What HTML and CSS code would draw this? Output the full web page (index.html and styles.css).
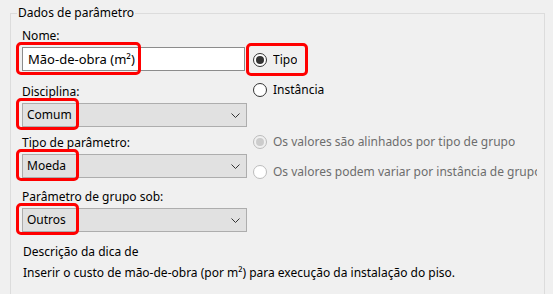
FILE: index.html
```html
<!DOCTYPE html>
<html lang="pt">
<head>
    <meta charset="UTF-8">
    <title>Dados de parâmetro</title>
    <link rel="stylesheet" href="styles.css">
</head>
<body>
    <fieldset class="group">
        <legend>Dados de parâmetro</legend>
        <div class="columns">
            <div class="left-col">
                <div class="field">
                    <label class="label">Nome:</label>
                    <div class="input">Mão-de-obra (m²)</div>
                    <span class="mark mark-name"></span>
                </div>
                <div class="field loose">
                    <label class="label">Disciplina:</label>
                    <div class="select">Comum
                        <svg class="chevron" width="9" height="5" viewBox="0 0 9 5"><polyline points="0.5,0.5 4.5,4.5 8.5,0.5" fill="none" stroke="#333" stroke-width="1"/></svg>
                    </div>
                    <span class="mark mark-select"></span>
                </div>
                <div class="field tight">
                    <label class="label">Tipo de parâmetro:</label>
                    <div class="select">Moeda
                        <svg class="chevron" width="9" height="5" viewBox="0 0 9 5"><polyline points="0.5,0.5 4.5,4.5 8.5,0.5" fill="none" stroke="#333" stroke-width="1"/></svg>
                    </div>
                    <span class="mark mark-select"></span>
                </div>
                <div class="field">
                    <label class="label">Parâmetro de grupo sob:</label>
                    <div class="select">Outros
                        <svg class="chevron" width="9" height="5" viewBox="0 0 9 5"><polyline points="0.5,0.5 4.5,4.5 8.5,0.5" fill="none" stroke="#333" stroke-width="1"/></svg>
                    </div>
                    <span class="mark mark-select"></span>
                </div>
            </div>
            <div class="right-col">
                <div class="radio-group">
                    <div class="radio">
                        <span class="dot checked"></span>
                        <span class="radio-text">Tipo</span>
                        <span class="mark mark-radio"></span>
                    </div>
                    <div class="radio">
                        <span class="dot"></span>
                        <span class="radio-text">Instância</span>
                    </div>
                </div>
                <div class="radio-group disabled">
                    <div class="radio">
                        <span class="dot checked"></span>
                        <span class="radio-text">Os valores são alinhados por tipo de grupo</span>
                    </div>
                    <div class="radio">
                        <span class="dot"></span>
                        <span class="radio-text">Os valores podem variar por instância de grupo</span>
                    </div>
                </div>
            </div>
        </div>
        <p class="desc-title">Descrição da dica de</p>
        <p class="desc">Inserir o custo de mão-de-obra (por m²) para execução da instalação do piso.</p>
    </fieldset>
</body>
</html>
```

FILE: styles.css
```css
body {
    margin: 0;
    background-color: #f0f0f0;
    font-family: 'Noto Sans', 'Open Sans', sans-serif;
    font-size: 12px;
    line-height: 16px;
    color: #000;
    height: 294px;
    overflow: hidden;
}

.group {
    box-sizing: border-box;
    width: 535px;
    height: 300px;
    margin: 5px 0 0 10px;
    padding: 7px 0 0 11px;
    border: 1px solid #dcdcdc;
    min-width: 0;
}

.group legend {
    padding: 0 1px;
    margin-left: -5px;
}

.columns {
    display: flex;
    gap: 6px;
}

.left-col {
    width: 225px;
    flex: none;
}

.field {
    position: relative;
}

.field + .field {
    margin-top: 11px;
}

.field.loose {
    margin-top: 13px;
}

.field.tight {
    margin-top: 8px;
}

.label {
    display: block;
    margin-bottom: 3px;
}

.input {
    box-sizing: border-box;
    width: 223px;
    height: 24px;
    padding: 2px 5px;
    font-size: 13px;
    line-height: 18px;
    background-color: #fff;
    border: 1px solid #8c8c8c;
}

.select {
    box-sizing: border-box;
    position: relative;
    width: 225px;
    height: 24px;
    padding: 3px 4px;
    background-color: #e1e1e1;
    border: 1px solid #adadad;
}

.chevron {
    position: absolute;
    right: 6px;
    top: 9px;
}

.mark {
    position: absolute;
    box-sizing: border-box;
    border: 3px solid #f00;
    border-radius: 5px;
}

.mark-name {
    left: -6px;
    top: 14px;
    width: 125px;
    height: 33px;
}

.mark-select {
    left: -6px;
    top: 14px;
    width: 63px;
    height: 32px;
}

.mark-radio {
    left: -7px;
    top: -5px;
    width: 62px;
    height: 33px;
}

.right-col {
    width: 284px;
    padding-top: 20px;
    white-space: nowrap;
}

.radio-group {
    display: flex;
    flex-direction: column;
    gap: 6px;
}

.radio-group.disabled {
    margin-top: 28px;
    color: #6d6d6d;
}

.radio {
    position: relative;
    display: flex;
    align-items: center;
    height: 24px;
}

.radio-text {
    min-width: 0;
    overflow: hidden;
}

.dot {
    box-sizing: border-box;
    width: 14px;
    height: 14px;
    margin-right: 6px;
    border: 1px solid #333;
    border-radius: 50%;
    background-color: #fff;
    flex: none;
    display: flex;
    align-items: center;
    justify-content: center;
}

.dot.checked::after {
    content: "";
    width: 8px;
    height: 8px;
    border-radius: 50%;
    background-color: #333;
}

.disabled .dot {
    border-color: #bcbcbc;
}

.disabled .dot.checked {
    background-color: #f0f0f0;
}

.disabled .dot.checked::after {
    background-color: #cccccc;
}

.desc-title {
    margin: 12px 0 0 1px;
}

.desc {
    margin: 5px 0 0 1px;
    white-space: nowrap;
}
```
